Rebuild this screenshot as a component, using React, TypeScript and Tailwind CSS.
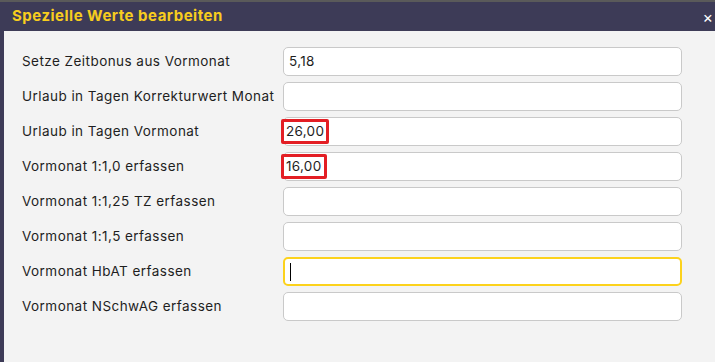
import React from 'react';

const rows: { label: string; value: string; marked?: boolean; focused?: boolean }[] = [
  { label: 'Setze Zeitbonus aus Vormonat', value: '5,18' },
  { label: 'Urlaub in Tagen Korrekturwert Monat', value: '' },
  { label: 'Urlaub in Tagen Vormonat', value: '26,00', marked: true },
  { label: 'Vormonat 1:1,0 erfassen', value: '16,00', marked: true },
  { label: 'Vormonat 1:1,25 TZ erfassen', value: '' },
  { label: 'Vormonat 1:1,5 erfassen', value: '' },
  { label: 'Vormonat HbAT erfassen', value: '', focused: true },
  { label: 'Vormonat NSchwAG erfassen', value: '' },
];

export default function App() {
  return (
    <div className="w-[715px] h-[362px] overflow-hidden bg-[#5a5a5a] pt-[2px] font-['Inter','Liberation_Sans',sans-serif]">
      <div className="h-[360px] bg-[#3d3b57] pl-[4px] flex flex-col">
        {/* Header */}
        <div className="h-[29px] flex items-center justify-between pl-[8px] pr-[2px]">
          <h3 className="text-[15px] font-bold text-[#f7cd1e] tracking-[0.5px]">Spezielle Werte bearbeiten</h3>
          <span className="text-white text-[16px] leading-none">×</span>
        </div>

        {/* Content */}
        <div className="flex-1 bg-[#f3f3f3] pt-[16px] pl-[18px] flex flex-col gap-[6px]">
          {rows.map((r) => (
            <div key={r.label} className="flex items-center h-[29px]">
              <label className="w-[261px] text-[13.5px] text-[#1e1e1e] tracking-[0.45px]">{r.label}</label>
              <div
                className={`relative w-[399px] h-[29px] bg-white rounded-[5px] flex items-center px-[5px] text-[13.5px] text-[#1e1e1e] tracking-[0.3px] ${
                  r.focused ? 'border-2 border-[#fcd21c] px-[4px]' : 'border border-[#c9c9c9]'
                }`}
              >
                {r.marked ? (
                  <span className="absolute left-[-3px] top-[1px] bottom-[1px] border-[3px] border-[#e31e24] rounded-[2px] px-[2px] flex items-center">
                    {r.value}
                  </span>
                ) : (
                  <span>{r.value}</span>
                )}
                {r.focused && <span className="w-px h-[18px] bg-black" />}
              </div>
            </div>
          ))}
        </div>
      </div>
    </div>
  );
}
